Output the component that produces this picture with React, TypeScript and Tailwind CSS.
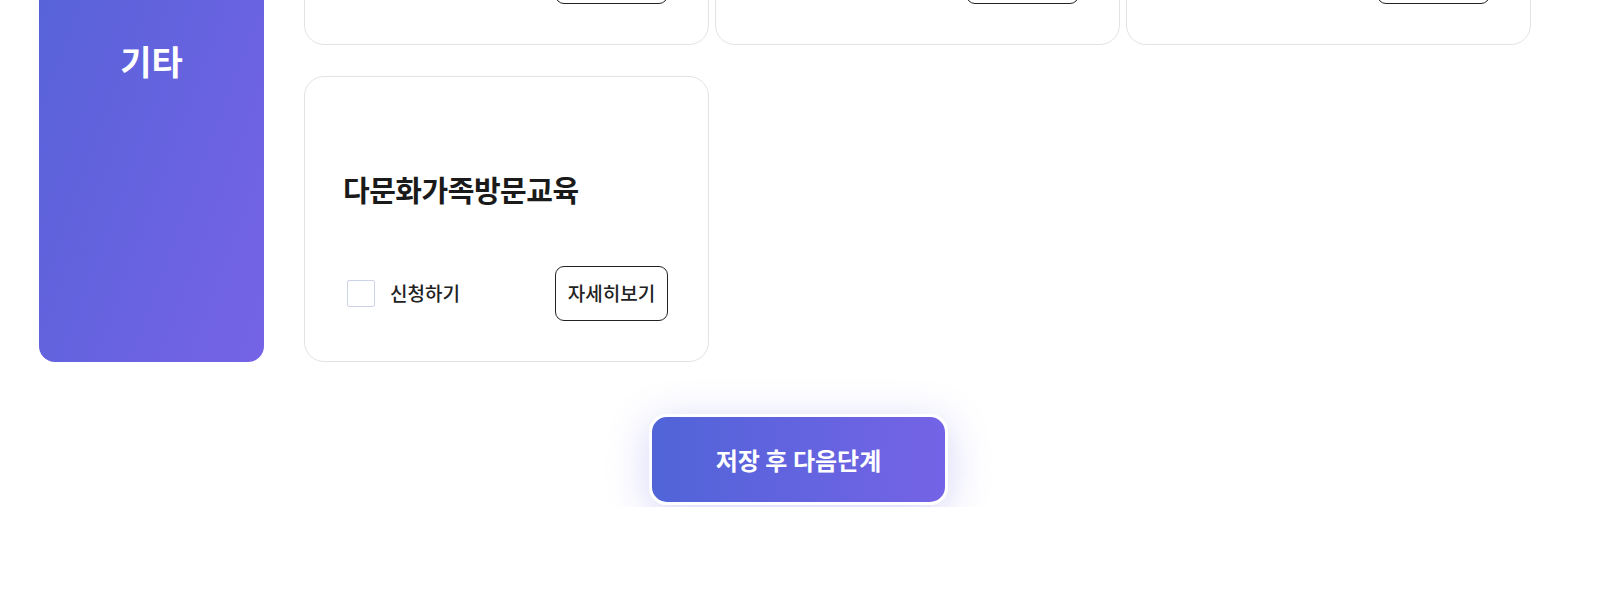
import { useState } from "react";

type Program = { id: number; title: string };

const programs: Program[] = [
  { id: 1, title: "한국어교육" },
  { id: 2, title: "자녀생활서비스" },
  { id: 3, title: "통번역서비스" },
  { id: 4, title: "다문화가족방문교육" },
];

function ProgramCard({ program }: { program: Program }) {
  const [checked, setChecked] = useState(false);

  return (
    <div className="h-[286px] rounded-[20px] border border-[#e3e3e3] bg-white pl-[38px] pr-[40px] py-10 flex flex-col">
      <div className="flex-1 flex items-center pb-[5px]">
        <h3 className="text-[29px] font-bold leading-none tracking-[-0.5px] text-[#1a1a1a]">
          {program.title}
        </h3>
      </div>
      <div className="flex items-center justify-between">
        <label className="flex items-center gap-[15px] cursor-pointer">
          <input
            type="checkbox"
            checked={checked}
            onChange={(e) => setChecked(e.target.checked)}
            className="ml-[4px] w-[28px] h-[27px] appearance-none border border-[#cdd2e6] rounded-[2px] bg-white checked:bg-[#5b63d9]"
          />
          <span className="text-[19px] font-medium text-[#222]">신청하기</span>
        </label>
        <button className="w-[113px] h-[55px] rounded-[9px] border border-[#222] bg-white text-[19px] font-medium text-[#222]">
          자세히보기
        </button>
      </div>
    </div>
  );
}

export default function App() {
  return (
    <div
      className="min-h-screen bg-white overflow-hidden"
      style={{ fontFamily: "'Noto Sans CJK KR', 'Noto Sans', sans-serif" }}
    >
      {/* Category row (scrolled, top part is off screen) */}
      <div className="-mt-[241px] flex pl-[39px] gap-[40px]">
        <div className="w-[225px] shrink-0 rounded-[16px] bg-linear-to-br from-[#4f62d6] to-[#7563e6] flex items-center justify-center">
          <span className="text-[34px] font-bold text-white">기타</span>
        </div>
        <div className="w-[1227px] grid grid-cols-3 gap-x-[6px] gap-y-[31px]">
          {programs.map((p) => (
            <ProgramCard key={p.id} program={p} />
          ))}
        </div>
      </div>

      {/* Save button */}
      <div className="mt-[17px] pt-[35px] pb-[2px] pr-[16px] flex justify-center overflow-hidden">
        <button className="w-[299px] h-[91px] rounded-[18px] border-[3px] border-white bg-linear-to-r from-[#5064d8] to-[#7463e6] text-[24px] font-bold text-white shadow-[0_8px_40px_rgba(100,100,230,0.28)]">
          저장 후 다음단계
        </button>
      </div>
    </div>
  );
}
